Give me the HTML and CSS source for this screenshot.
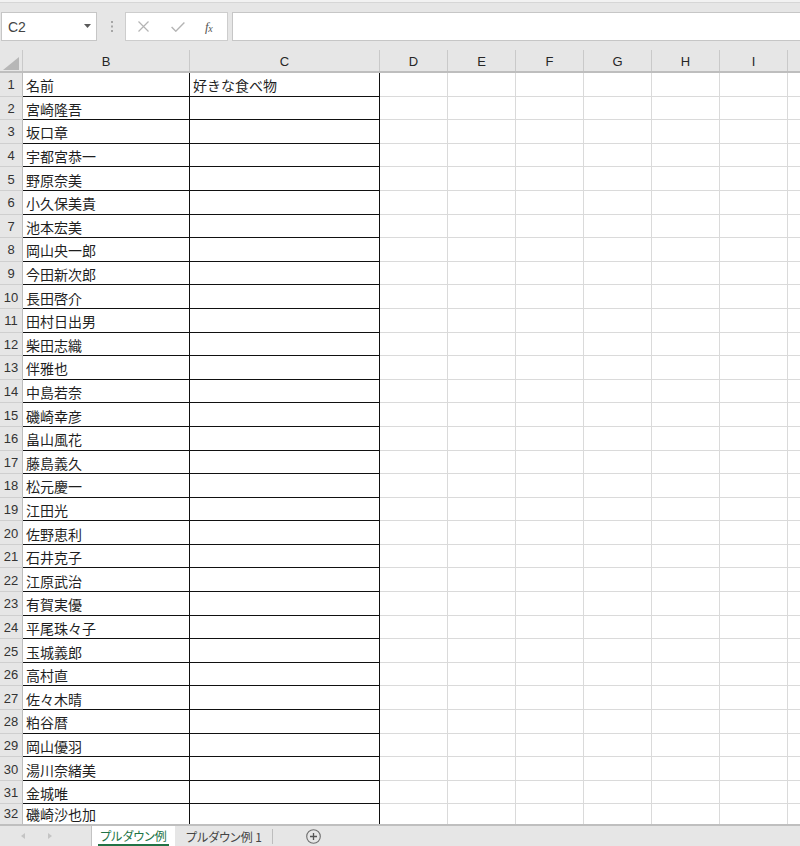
FILE: index.html
```html
<!DOCTYPE html>
<html lang="ja">
<head>
<meta charset="utf-8">
<title>プルダウン例</title>
<link rel="stylesheet" href="styles.css">
</head>
<body>
<div class="app">
  <div class="topline"></div>
  <div class="toolbar">
    <div class="namebox">
      <span class="nb-text">C2</span>
      <svg class="nb-arrow" width="7" height="4" viewBox="0 0 7 4"><path d="M0 0h7L3.5 4z" fill="#5a5a5a"/></svg>
    </div>
    <div class="grip">
      <svg width="2" height="11" viewBox="0 0 2 11"><rect x="0" y="0" width="2" height="2" fill="#a6a6a6"/><rect x="0" y="4.5" width="2" height="2" fill="#a6a6a6"/><rect x="0" y="9" width="2" height="2" fill="#a6a6a6"/></svg>
    </div>
    <div class="fbtns">
      <svg class="fb-x" width="11" height="11" viewBox="0 0 11 11"><path d="M0.5 0.5L10.5 10.5M10.5 0.5L0.5 10.5" stroke="#b4b4b4" stroke-width="1.2" fill="none"/></svg>
      <svg class="fb-ok" width="14" height="10" viewBox="0 0 14 10"><path d="M0.6 5L4.8 9.2L13.4 0.6" stroke="#b4b4b4" stroke-width="1.4" fill="none"/></svg>
      <span class="fx">f<span class="fx-x">x</span></span>
    </div>
    <div class="formula"></div>
  </div>

  <div class="sheet">
    <div class="hrow">
      <div class="corner"><svg width="16" height="13" viewBox="0 0 16 13"><path d="M16 0V13H0z" fill="#b7b7b7"/></svg></div>
      <div class="ch colb">B</div>
      <div class="ch colc">C</div>
      <div class="ch">D</div>
      <div class="ch">E</div>
      <div class="ch">F</div>
      <div class="ch">G</div>
      <div class="ch">H</div>
      <div class="ch">I</div>
      <div class="ch"></div>
    </div>
    <div class="row"><div class="rh">1</div><div class="cb">名前</div><div class="cc">好きな食べ物</div><div class="fill"></div></div>
    <div class="row"><div class="rh">2</div><div class="cb">宮崎隆吾</div><div class="cc"></div><div class="fill"></div></div>
    <div class="row"><div class="rh">3</div><div class="cb">坂口章</div><div class="cc"></div><div class="fill"></div></div>
    <div class="row"><div class="rh">4</div><div class="cb">宇都宮恭一</div><div class="cc"></div><div class="fill"></div></div>
    <div class="row"><div class="rh">5</div><div class="cb">野原奈美</div><div class="cc"></div><div class="fill"></div></div>
    <div class="row"><div class="rh">6</div><div class="cb">小久保美貴</div><div class="cc"></div><div class="fill"></div></div>
    <div class="row"><div class="rh">7</div><div class="cb">池本宏美</div><div class="cc"></div><div class="fill"></div></div>
    <div class="row"><div class="rh">8</div><div class="cb">岡山央一郎</div><div class="cc"></div><div class="fill"></div></div>
    <div class="row"><div class="rh">9</div><div class="cb">今田新次郎</div><div class="cc"></div><div class="fill"></div></div>
    <div class="row"><div class="rh">10</div><div class="cb">長田啓介</div><div class="cc"></div><div class="fill"></div></div>
    <div class="row"><div class="rh">11</div><div class="cb">田村日出男</div><div class="cc"></div><div class="fill"></div></div>
    <div class="row"><div class="rh">12</div><div class="cb">柴田志織</div><div class="cc"></div><div class="fill"></div></div>
    <div class="row"><div class="rh">13</div><div class="cb">伴雅也</div><div class="cc"></div><div class="fill"></div></div>
    <div class="row"><div class="rh">14</div><div class="cb">中島若奈</div><div class="cc"></div><div class="fill"></div></div>
    <div class="row"><div class="rh">15</div><div class="cb">磯崎幸彦</div><div class="cc"></div><div class="fill"></div></div>
    <div class="row"><div class="rh">16</div><div class="cb">畠山風花</div><div class="cc"></div><div class="fill"></div></div>
    <div class="row"><div class="rh">17</div><div class="cb">藤島義久</div><div class="cc"></div><div class="fill"></div></div>
    <div class="row"><div class="rh">18</div><div class="cb">松元慶一</div><div class="cc"></div><div class="fill"></div></div>
    <div class="row"><div class="rh">19</div><div class="cb">江田光</div><div class="cc"></div><div class="fill"></div></div>
    <div class="row"><div class="rh">20</div><div class="cb">佐野恵利</div><div class="cc"></div><div class="fill"></div></div>
    <div class="row"><div class="rh">21</div><div class="cb">石井克子</div><div class="cc"></div><div class="fill"></div></div>
    <div class="row"><div class="rh">22</div><div class="cb">江原武治</div><div class="cc"></div><div class="fill"></div></div>
    <div class="row"><div class="rh">23</div><div class="cb">有賀実優</div><div class="cc"></div><div class="fill"></div></div>
    <div class="row"><div class="rh">24</div><div class="cb">平尾珠々子</div><div class="cc"></div><div class="fill"></div></div>
    <div class="row"><div class="rh">25</div><div class="cb">玉城義郎</div><div class="cc"></div><div class="fill"></div></div>
    <div class="row"><div class="rh">26</div><div class="cb">高村直</div><div class="cc"></div><div class="fill"></div></div>
    <div class="row"><div class="rh">27</div><div class="cb">佐々木晴</div><div class="cc"></div><div class="fill"></div></div>
    <div class="row"><div class="rh">28</div><div class="cb">粕谷暦</div><div class="cc"></div><div class="fill"></div></div>
    <div class="row"><div class="rh">29</div><div class="cb">岡山優羽</div><div class="cc"></div><div class="fill"></div></div>
    <div class="row"><div class="rh">30</div><div class="cb">湯川奈緒美</div><div class="cc"></div><div class="fill"></div></div>
    <div class="row"><div class="rh">31</div><div class="cb">金城唯</div><div class="cc"></div><div class="fill"></div></div>
    <div class="row last"><div class="rh">32</div><div class="cb">磯崎沙也加</div><div class="cc"></div><div class="fill"></div></div>
  </div>

  <div class="tabbar">
    <div class="tabnav">
      <svg width="4" height="6" viewBox="0 0 4 6"><path d="M4 0V6L0 3z" fill="#c4c4c4"/></svg>
      <svg width="4" height="6" viewBox="0 0 4 6"><path d="M0 0V6L4 3z" fill="#c4c4c4"/></svg>
    </div>
    <div class="tab active"><span class="tab-label">プルダウン例</span></div>
    <div class="tab"><span class="tab-label">プルダウン例 1</span></div>
    <div class="addsheet">
      <svg width="15" height="15" viewBox="0 0 15 15"><circle cx="7.5" cy="7.5" r="6.8" stroke="#6e6e6e" stroke-width="1.1" fill="none"/><path d="M7.5 4V11M4 7.5H11" stroke="#555" stroke-width="1.3"/></svg>
    </div>
  </div>
</div>
</body>
</html>
```
FILE: styles.css
```css
* { box-sizing: border-box; }
html, body { margin: 0; padding: 0; }
body {
  font-family: "Liberation Sans", Arial, sans-serif;
  background: #e6e6e6;
}
.app {
  width: 800px;
  height: 846px;
  display: flex;
  flex-direction: column;
  overflow: hidden;
  background: #e6e6e6;
}
.topline {
  height: 3px;
  background: #f2f2f2;
  border-bottom: 1px solid #d6d6d6;
  flex: none;
}
.toolbar {
  flex: none;
  height: 29px;
  margin-top: 9px;
  margin-bottom: 9px;
  display: flex;
}
.namebox {
  margin-left: 1px;
  width: 96px;
  background: #fff;
  border: 1px solid #c6c6c6;
  display: flex;
  align-items: center;
  justify-content: space-between;
  padding: 0 5px 0 6px;
}
.nb-text {
  font-size: 14px;
  color: #444;
  padding-top: 1px;
}
.nb-arrow { margin-top: -1px; }
.grip {
  width: 28px;
  display: flex;
  align-items: center;
  justify-content: center;
  padding-left: 1px;
}
.fbtns {
  width: 103px;
  background: #fff;
  border: 1px solid #cdcdcd;
  display: flex;
  align-items: center;
  padding-left: 12px;
}
.fb-x { margin-right: 22px; }
.fb-ok { margin-right: 20px; margin-top: 1px; }
.fx {
  font-family: "Liberation Serif", "Times New Roman", serif;
  font-style: italic;
  font-size: 13px;
  color: #555;
  letter-spacing: -0.5px;
}
.fx-x { font-size: 10px; vertical-align: -1px; }
.formula {
  flex: 1;
  margin-left: 4px;
  background: #fff;
  border: 1px solid #c6c6c6;
  border-right: none;
}

/* Sheet */
.sheet {
  flex: 1;
  overflow: hidden;
  background: #fff;
}
.hrow {
  display: flex;
  height: 23px;
  background: #e6e6e6;
  border-bottom: 2px solid #bebebe;
}
.corner {
  flex: none;
  width: 23px;
  border-right: 1px solid #c9c9c9;
  display: flex;
  align-items: flex-end;
  justify-content: flex-end;
  padding: 0 3px 1px 0;
}
.ch {
  flex: none;
  width: 68px;
  border-right: 1px solid #c9c9c9;
  text-align: center;
  font-size: 13px;
  line-height: 21px;
  padding-top: 1px;
  color: #262626;
}
.ch.colb { width: 167px; }
.ch.colc { width: 190px; }

.row {
  display: flex;
  height: 23.6px;
}
.rh {
  flex: none;
  width: 23px;
  background: #e6e6e6;
  border-right: 1px solid #bdbdbd;
  border-bottom: 1px solid #cfcfcf;
  font-size: 13px;
  color: #333;
  text-align: center;
  display: flex;
  align-items: center;
  justify-content: center;
  padding-top: 1px;
}
.cb, .cc {
  flex: none;
  border-right: 1px solid #111;
  border-bottom: 1px solid #111;
  font-family: "Noto Sans CJK JP", "Noto Sans", sans-serif;
  font-size: 14px;
  color: #1f1f1f;
  padding-left: 3px;
  display: flex;
  align-items: center;
  padding-top: 2px;
  white-space: nowrap;
  overflow: hidden;
}
.cb { width: 167px; }
.cc { width: 190px; }
.row.last .cb, .row.last .cc, .row.last .rh {
  align-items: flex-start;
  padding-top: 0;
  line-height: 20px;
}
.fill {
  flex: 1;
  min-width: 476px;
  border-bottom: 1px solid #dadada;
  background: repeating-linear-gradient(to right, transparent 0, transparent 67px, #dadada 67px, #dadada 68px);
}

/* Tabs */
.tabbar {
  flex: none;
  height: 22px;
  border-top: 2px solid #bfbfbf;
  background: #e6e6e6;
  display: flex;
  align-items: stretch;
}
.tabnav {
  width: 91px;
  display: flex;
  align-items: center;
  padding-left: 21px;
  gap: 23px;
}
.tab {
  display: flex;
  align-items: center;
  justify-content: center;
  font-family: "Noto Sans CJK JP", "Noto Sans", sans-serif;
  font-size: 12px;
  font-feature-settings: "palt";
  color: #444;
}
.tab.active {
  width: 84px;
  background: #fff;
  border-left: 1px solid #c3c3c3;
  color: #217346;
}
.tab.active .tab-label {
  border-bottom: 2px solid #217346;
  height: 20px;
  line-height: 19px;
  padding: 0 2px;
}
.tab:not(.active) {
  width: 98px;
  position: relative;
}
.tab:not(.active)::after {
  content: "";
  position: absolute;
  right: 0;
  top: 3px;
  bottom: 2px;
  width: 1px;
  background: #bdbdbd;
}
.addsheet {
  width: 80px;
  display: flex;
  align-items: center;
  justify-content: center;
}
```
